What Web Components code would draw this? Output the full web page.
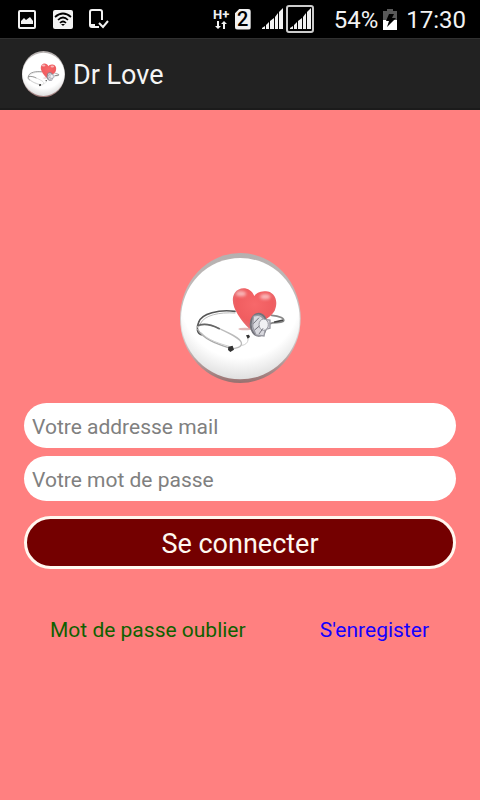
<!DOCTYPE html>
<html lang="fr">
<head>
<meta charset="utf-8">
<meta name="viewport" content="width=device-width, initial-scale=1">
<title>Dr Love</title>
<style>
  html, body { margin: 0; min-height: 100%; }
  body { background: #ff8080; font-family: Roboto, "Noto Sans", sans-serif; }
</style>
</head>
<body>
<login-app></login-app>

<script>
const define = (name, html, setup) => {
  const template = document.createElement('template');
  template.innerHTML = html;
  customElements.define(name, class extends HTMLElement {
    constructor() {
      super();
      this.attachShadow({ mode: 'open' }).append(template.content.cloneNode(true));
    }
    connectedCallback() { if (setup) setup(this, this.shadowRoot); }
  });
};

define('status-bar', `
  <style>
    :host { display: flex; align-items: center; justify-content: space-between; box-sizing: border-box; height: 38px; padding: 0 14px 0 17px; background: #000; color: #f2f2f2; font-size: 24px; line-height: 28px; }
    div { display: flex; align-items: center; }
    svg { display: block; flex: none; }
    .notices { gap: 16px; }
    .percent { margin: 2px 5px 0 20px; }
    .time { margin: 2px 0 0 9px; }
    .net { flex-direction: column; width: 17px; font-size: 13px; font-weight: 700; line-height: 12px; }
    .sim { justify-content: center; width: 16px; height: 21px; margin: 0 11px 0 5px; background: #f2f2f2; color: #000; border-radius: 3px; clip-path: polygon(5px 0, 100% 0, 100% 100%, 0 100%, 0 5px); font-size: 20px; font-weight: 500; line-height: 21px; }
  </style>
  <div class="notices">
    <svg width="20" height="20" viewBox="0 0 20 20"><rect x="2" y="2" width="16" height="17" rx="1" fill="none" stroke="#f2f2f2" stroke-width="2"/><path d="M4 15v-3l3-3 2 2 4-3 3 4v3z" fill="#f2f2f2"/></svg>
    <svg width="20" height="20" viewBox="0 0 20 20"><rect y="1" width="20" height="19" rx="2" fill="#f2f2f2"/><g fill="none" stroke="#000" stroke-width="1.7"><path d="M2 8Q10 1 18 8M5 11Q10 6 15 11M7 14Q10 11 13 14"/></g><path d="M8 15h4l-2 2z"/></svg>
    <svg width="20" height="20" viewBox="0 0 20 20"><path d="M13 11V3Q13 1 11 1H3Q1 1 1 3v13q0 2 2 2h7" fill="none" stroke="#f2f2f2" stroke-width="2"/><path d="M2 15h4v3H2z" fill="#f2f2f2"/><path d="M10 14l4 4 5-6" fill="none" stroke="#f2f2f2" stroke-width="2"/></svg>
  </div>
  <div>
    <div class="net"><span>H+</span><svg width="12" height="8" viewBox="0 0 12 8" fill="#f2f2f2"><path d="M2 0h2v5h2L3 8 0 5h2zM8 8h2V3h2L9 0 6 3h2z"/></svg></div>
    <div class="sim">2</div>
    <svg width="52" height="28" viewBox="0 0 52 28"><g fill="#f2f2f2"><path d="M0 24v-1l3-2v3zM4 24v-4l3-3v7zM8 24v-8l4-3v11zM13 24V12l3-4v16zM17 24V7l4-4v21z"/><path d="M28 24v-1l3-2v3zM32 24v-4l3-3v7zM36 24v-8l4-3v11zM41 24V12l3-4v16zM45 24V7l4-4v21z"/></g><rect x="25" y="1" width="26" height="26" rx="2" fill="none" stroke="#ccc" stroke-width="2"/></svg>
    <span class="percent">54%</span>
    <svg width="14" height="21" viewBox="0 0 14 21"><path d="M4 0h6v2h4v9H0V2h4z" fill="#595959"/><path d="M0 11h14v10H0z" fill="#fff"/><path d="M6 5h5L9 9h4L4 18l2-6H3z" fill="#000"/></svg>
    <span class="time">17:30</span>
  </div>`);

define('love-logo', `
  <style>
    :host { display: block; }
    svg { display: block; width: 100%; height: auto; }
  </style>
  <svg viewBox="27 24 363 390" role="img" aria-label="Dr Love">
    <defs>
      <radialGradient id="disc" cx=".5" cy=".32" r=".7"><stop offset=".72" stop-color="#fff"/><stop offset="1" stop-color="#dcdcdc"/></radialGradient>
      <linearGradient id="rim" x2="0" y2="1"><stop stop-color="#b5b0af"/><stop offset=".4" stop-color="#c5bfbe"/><stop offset=".6" stop-color="#ddd"/><stop offset="1" stop-color="#98706f"/></linearGradient>
      <radialGradient id="heart" cx=".5" cy=".4" r=".65"><stop stop-color="#f7686a"/><stop offset=".65" stop-color="#f05d60"/><stop offset="1" stop-color="#e0757a"/></radialGradient>
      <filter id="soft" x="-.5" y="-.5" width="2" height="2"><feGaussianBlur stdDeviation="5"/></filter>
    </defs>
    <ellipse cx="208" cy="219" rx="181" ry="195" fill="url(#rim)"/>
    <ellipse cx="208" cy="221" rx="178" ry="182" fill="url(#disc)"/>
    <g fill="none" stroke-linecap="round">
      <path d="M192 199C145 193 91 205 83 232C75 250 79 265 91 269" stroke="#555" stroke-width="5"/>
      <path d="M192 204C145 201 100 210 88 236" stroke="#bbb" stroke-width="3"/>
      <path d="M79 246C96 230 128 242 148 252C178 266 207 279 211 293C215 307 194 311 177 312" stroke="#bbb" stroke-width="4"/>
      <path d="M80 253C99 286 149 300 178 310" stroke="#aaa" stroke-width="4"/>
      <path d="M83 241C102 234 127 242 145 251" stroke="#666" stroke-width="5"/>
      <path d="M91 263C110 286 147 296 174 304" stroke="#ccc" stroke-width="3"/>
      <path d="M213 301C225 300 234 290 231 276" stroke="#ccc" stroke-width="3"/>
      <path d="M302 211C325 212 344 222 337 229C327 236 308 230 297 236" stroke="#888" stroke-width="5"/>
    </g>
    <ellipse cx="222" cy="252" rx="20" ry="4" fill="#c88" opacity=".6"/>
    <path d="M250 153C239 127 207 122 191 144C173 174 202 218 235 251C248 238 295 226 311 197C326 161 304 135 280 139C264 140 255 146 250 153Z" fill="url(#heart)"/>
    <g fill="#fff" opacity=".55" filter="url(#soft)"><ellipse cx="210" cy="146" rx="15" ry="8"/><ellipse cx="283" cy="155" rx="15" ry="8"/></g>
    <ellipse cx="263" cy="239" rx="24" ry="33" fill="#b5b5be" stroke="#72727a" stroke-width="6"/>
    <path d="M247 214q21-10 31 9l19 2v25l-14 3-4 20-24-3-10-24z" fill="#d9d9df" stroke="#9999a2" stroke-width="4"/>
    <ellipse cx="278" cy="239" rx="14" ry="17" fill="#f0f0f3" stroke="#9999a2" stroke-width="3"/>
    <path d="M247 236l17-18M251 255l14-12M264 267l12-17" stroke="#777780" stroke-width="3"/>
    <path d="M311 231l23-5" stroke="#444" stroke-width="5" stroke-linecap="round"/>
    <path d="M172 305l13-3 4 12-11 7-7-6zM225 271l9-2 3 7-7 5z" fill="#333"/>
  </svg>`);

define('app-header', `
  <style>
    :host { display: block; }
    header { display: flex; align-items: center; gap: 8px; box-sizing: border-box; height: 72px; padding: 1px 22px 0; background: #222; border-top: 1px solid #303030; border-bottom: 2px solid #1b1b1b; color: #f5f5f5; }
    love-logo { width: 43px; }
    h1 { margin: 0; padding-top: 2px; font-size: 27px; line-height: 32px; font-weight: 400; }
  </style>
  <header><love-logo></love-logo><h1><slot></slot></h1></header>`);

define('text-field', `
  <style>
    :host { display: block; }
    input { display: block; box-sizing: border-box; width: 100%; height: 45px; margin: 0; padding: 3px 8px 0; border: 0; border-radius: 23px; background: #fff; color: #222; font: 21px Roboto, "Noto Sans", sans-serif; outline-color: #740000; }
    input::placeholder { color: #808080; opacity: 1; }
  </style>
  <input>`, (host, root) => {
    const input = root.querySelector('input');
    input.type = host.getAttribute('type');
    input.placeholder = host.getAttribute('label');
    input.setAttribute('aria-label', host.getAttribute('label'));
  });

define('submit-button', `
  <style>
    :host { display: block; }
    button { display: block; box-sizing: border-box; width: 100%; height: 53px; margin: 0; padding: 3px 8px 0; border: 3px solid #fff8f0; border-radius: 27px; background: #740000; color: #fff8f0; font: 27px Roboto, "Noto Sans", sans-serif; cursor: pointer; }
  </style>
  <button type="button"><slot></slot></button>`);

define('text-link', `
  <style>
    :host { display: block; }
    a { color: inherit; text-decoration: none; font-size: 21px; line-height: 26px; }
  </style>
  <a href="#"><slot></slot></a>`);

define('login-app', `
  <style>
    :host { display: flex; flex-direction: column; min-height: 100vh; }
    main { flex: 1; display: flex; flex-direction: column; justify-content: center; padding: 0 24px; }
    love-logo { width: 121px; align-self: center; margin-bottom: 20px; }
    form { display: flex; flex-direction: column; gap: 8px; }
    submit-button { margin-top: 7px; }
    nav { display: flex; justify-content: space-between; padding: 48px 27px 15px 26px; }
    .forgot { color: #106000; }
    .register { color: #1400ff; }
  </style>
  <status-bar></status-bar>
  <app-header>Dr Love</app-header>
  <main>
    <love-logo></love-logo>
    <form>
      <text-field type="email" label="Votre addresse mail"></text-field>
      <text-field type="password" label="Votre mot de passe"></text-field>
      <submit-button>Se connecter</submit-button>
    </form>
    <nav>
      <text-link class="forgot">Mot de passe oublier</text-link>
      <text-link class="register">S'enregister</text-link>
    </nav>
  </main>`);
</script>
</body>
</html>
